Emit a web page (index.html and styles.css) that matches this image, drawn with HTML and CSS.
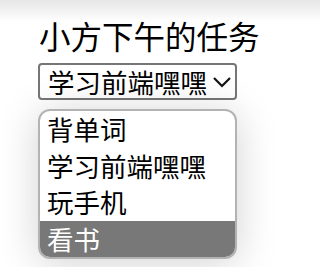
FILE: index.html
```html
<!DOCTYPE html>
<html lang="zh">
<head>
<meta charset="utf-8">
<link rel="stylesheet" href="styles.css">
</head>
<body>
<h1 class="title">小方下午的任务</h1>
<div class="group">
  <div class="select">
    <span class="value">学习前端嘿嘿</span>
    <svg class="chev" width="20" height="12" viewBox="0 0 20 12"><path d="M2 2 L10 10 L18 2" fill="none" stroke="#111" stroke-width="2.2"/></svg>
  </div>
  <div class="list">
    <div class="opt">背单词</div>
    <div class="opt">学习前端嘿嘿</div>
    <div class="opt">玩手机</div>
    <div class="opt sel">看书</div>
  </div>
</div>
</body>
</html>
```
FILE: styles.css
```css
html, body {
  margin: 0;
  height: 100%;
}
body {
  background: linear-gradient(#e6e6e6 0, #fff 22px);
  font-family: "Noto Sans CJK SC", "Noto Sans", sans-serif;
  color: #000;
}
.title {
  margin: 0;
  padding: 15px 0 0 39px;
  font-size: 31.5px;
  line-height: 40px;
  font-weight: normal;
}
.group {
  padding-left: 38px;
  padding-top: 8px;
}
.select {
  box-sizing: border-box;
  width: 199px;
  height: 37px;
  border: 2px solid #767676;
  border-radius: 4px;
  background: #fff;
  display: flex;
  align-items: center;
  justify-content: space-between;
  padding: 0 3px 0 8px;
}
.value {
  font-size: 26.5px;
  line-height: 33px;
}
.chev {
  display: block;
}
.list {
  box-sizing: border-box;
  width: 199px;
  margin-top: 9px;
  border: 2px solid #b3b3b3;
  border-radius: 12px;
  overflow: hidden;
  background: #fff;
  box-shadow: 0 4px 40px rgba(0, 0, 0, 0.18);
}
.opt {
  height: 36.5px;
  line-height: 36.5px;
  font-size: 26.5px;
  padding-left: 7px;
}
.opt.sel {
  background: #787878;
  color: #fff;
}
```
